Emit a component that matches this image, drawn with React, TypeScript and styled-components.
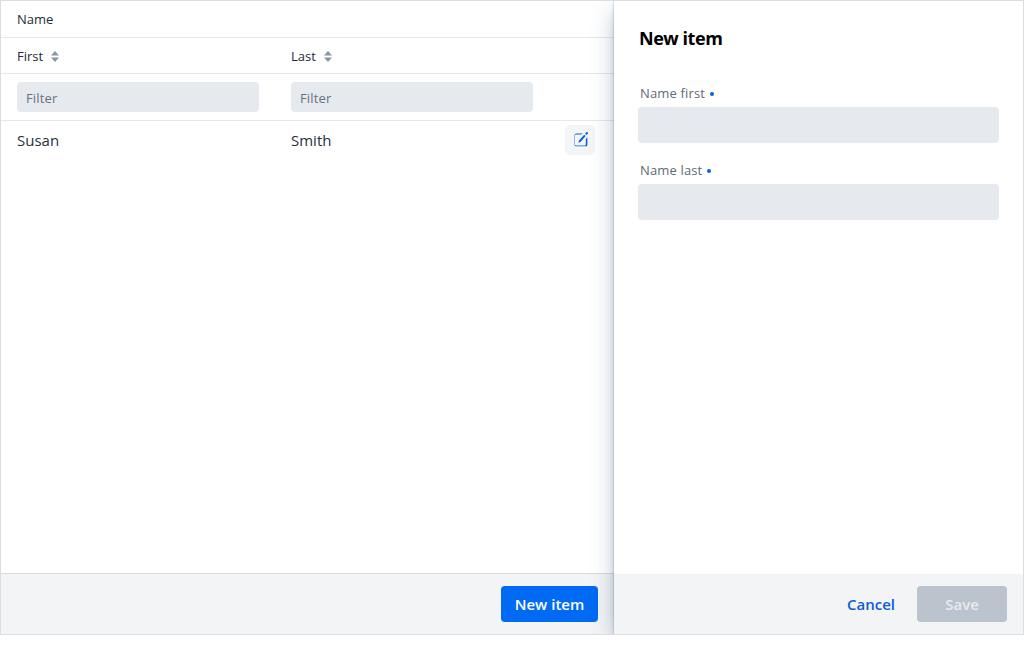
import React from "react";
import styled, { createGlobalStyle } from "styled-components";

const GlobalStyle = createGlobalStyle`
  * { box-sizing: border-box; }
  body { margin: 0; background: #fff; font-family: "Open Sans", "Noto Sans", sans-serif; }
`;

const Crud = styled.div`
  display: flex;
  width: 1024px;
  height: 635px;
  border: 1px solid #dadee4;
  overflow: hidden;
  background: #fff;
`;

const Main = styled.section`
  display: flex;
  flex-direction: column;
  width: 613px;
  flex: none;
`;

const Grid = styled.div`
  flex: 1;
`;

const Row = styled.div<{ $height: number; $line?: boolean }>`
  display: grid;
  grid-template-columns: 274px 274px 64px;
  align-items: center;
  height: ${(p) => p.$height}px;
  border-bottom: ${(p) => (p.$line ? "1px solid #e5e8ec" : "none")};
`;

const Cell = styled.div`
  display: flex;
  align-items: center;
  padding: 0 16px;
`;

const Text = styled.span<{ $spacing?: number }>`
  white-space: nowrap;
  letter-spacing: ${(p) => p.$spacing ?? 0}px;
`;

const HeaderText = styled(Text)`
  font-size: 13px;
  line-height: 20px;
  font-weight: 500;
  color: #1e2a3a;
`;

const BodyText = styled(Text)`
  font-size: 15px;
  line-height: 22px;
  color: #26313f;
`;

const SortIcon = styled.svg`
  margin: 1px 0 0 8px;
  fill: #8a94a2;
`;

const Filter = styled.input`
  width: 242px;
  height: 30px;
  padding: 2px 9px 0;
  border: 0;
  border-radius: 4px;
  outline: 0;
  background: #e6eaee;
  font: 500 13px "Open Sans", sans-serif;
  letter-spacing: 0.15px;
  &::placeholder { color: #66717f; opacity: 1; }
`;

const EditButton = styled.button`
  display: grid;
  place-items: center;
  width: 30px;
  height: 30px;
  padding: 0;
  border: 0;
  border-radius: 5px;
  background: #f3f5f7;
  color: #0b60dc;
`;

const Footer = styled.footer<{ $line?: boolean }>`
  display: flex;
  align-items: center;
  justify-content: flex-end;
  gap: 8px;
  height: ${(p) => (p.$line ? 61 : 60)}px;
  padding: 0 16px;
  border-top: ${(p) => (p.$line ? "1px solid #d5dae0" : "none")};
  background: #f3f4f6;
`;

const Button = styled.button<{ $kind: "primary" | "plain" | "disabled"; $width: number }>`
  width: ${(p) => p.$width}px;
  height: 36px;
  padding: 0;
  border: 0;
  border-radius: 4px;
  font: 600 15px/36px "Open Sans", sans-serif;
  white-space: nowrap;
  background: ${(p) => ({ primary: "#006af5", plain: "transparent", disabled: "#bbc3cd" })[p.$kind]};
  color: ${(p) => ({ primary: "#fff", plain: "#0b5cd5", disabled: "#e8ebef" })[p.$kind]};
`;

const Editor = styled.aside`
  display: flex;
  flex-direction: column;
  flex: 1;
  position: relative;
  background: #fff;
  box-shadow: 0 0 0 1px rgba(25, 59, 103, 0.1), 0 2px 6px -1px rgba(25, 59, 103, 0.2),
    0 8px 24px -4px rgba(25, 59, 103, 0.4);
`;

const Form = styled.div`
  flex: 1;
  padding: 24px 24px 0;
`;

const Title = styled.h3`
  margin: 0 0 31px 1px;
  font-size: 18px;
  line-height: 27px;
  font-weight: 700;
  letter-spacing: -0.45px;
  color: #000;
`;

const Field = styled.label`
  display: block;
  margin-bottom: 17px;
`;

const FieldLabel = styled.span`
  display: flex;
  align-items: center;
  height: 20px;
  margin: 0 0 4px 2px;
  font-size: 13px;
  font-weight: 500;
  letter-spacing: 0.15px;
  color: #5f6a78;
`;

const Required = styled.i`
  width: 4px;
  height: 4px;
  margin: 1px 0 0 5px;
  border-radius: 50%;
  background: #0b60dc;
`;

const Input = styled.input`
  display: block;
  width: 361px;
  height: 36px;
  border: 0;
  border-radius: 4px;
  outline: 0;
  background: #e6eaee;
`;

const Sorter = () => (
  <SortIcon width="8" height="11" viewBox="0 0 8 11">
    <path d="M0 4.5 4 0l4 4.5zM0 6.5h8L4 11z" />
  </SortIcon>
);

const EditIcon = () => (
  <svg width="24" height="24" viewBox="0 0 1000 1000" fill="currentColor">
    <path d="M673 281l62 56-205 233c-9 10-38 24-85 39a8 8 0 0 1-5 0c-4-1-7-5-6-9l0 0c14-48 25-76 35-86l204-233z m37-42l52-59c15-17 41-18 58-2 17 16 18 42 3 59L772 295l-62-56z M626 208l-67 67h-226l-16 0c-14 1-25 11-25 25l-1 17v366l1 16c1 12 11 22 23 24l18 1h366l17-1c13-1 24-12 25-25l0-17v-225l67-67v308c0 37-30 67-67 67h-400c-37 0-67-30-67-67v-400c0-37 30-67 67-67h293z" />
  </svg>
);

export default function App() {
  return (
    <>
      <GlobalStyle />
      <Crud>
        <Main>
          <Grid>
            <Row $height={37} $line>
              <Cell><HeaderText>Name</HeaderText></Cell>
            </Row>
            <Row $height={36} $line>
              {["First", "Last"].map((name) => (
                <Cell key={name}><HeaderText>{name}</HeaderText><Sorter /></Cell>
              ))}
            </Row>
            <Row $height={47} $line>
              <Cell><Filter placeholder="Filter" /></Cell>
              <Cell><Filter placeholder="Filter" /></Cell>
            </Row>
            <Row $height={37}>
              <Cell><BodyText>Susan</BodyText></Cell>
              <Cell><BodyText>Smith</BodyText></Cell>
              <Cell><EditButton aria-label="Edit"><EditIcon /></EditButton></Cell>
            </Row>
          </Grid>
          <Footer $line>
            <Button $kind="primary" $width={97}>New item</Button>
          </Footer>
        </Main>
        <Editor>
          <Form>
            <Title>New item</Title>
            {["Name first", "Name last"].map((name) => (
              <Field key={name}>
                <FieldLabel>{name}<Required /></FieldLabel>
                <Input />
              </Field>
            ))}
          </Form>
          <Footer>
            <Button $kind="plain" $width={76}>Cancel</Button>
            <Button $kind="disabled" $width={90} disabled>Save</Button>
          </Footer>
        </Editor>
      </Crud>
    </>
  );
}
